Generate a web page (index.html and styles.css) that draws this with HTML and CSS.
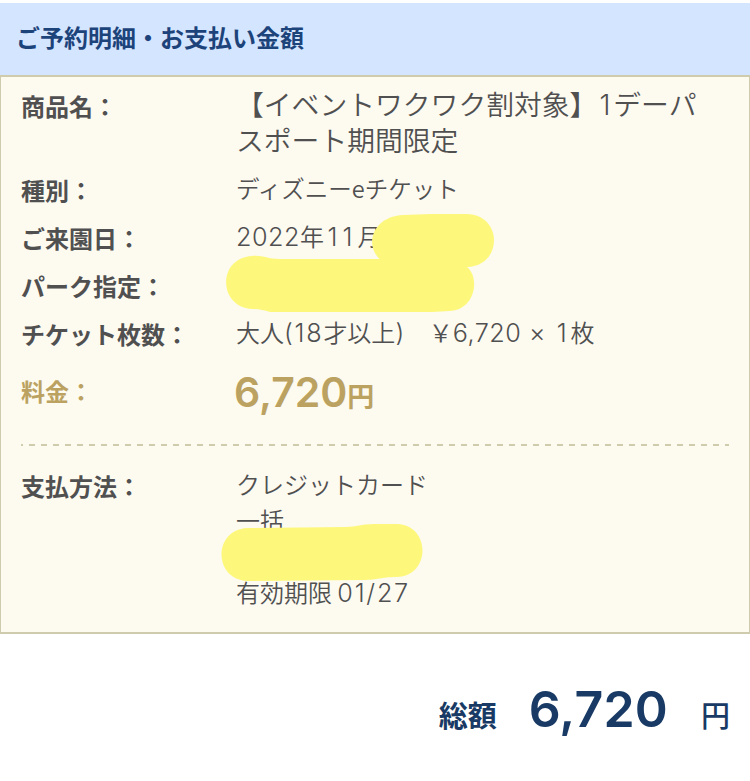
FILE: index.html
```html
<!DOCTYPE html>
<html lang="ja">
<head>
<meta charset="UTF-8">
<meta name="viewport" content="width=device-width,initial-scale=1">
<title>ご予約明細・お支払い金額</title>
<link rel="stylesheet" href="styles.css">
</head>
<body>
  <main>
    <h1 class="heading">ご予約明細・お支払い金額</h1>
    <section class="detail">
      <dl class="list">
        <div class="row name">
          <dt>商品名：</dt>
          <dd>【イベントワクワク割対象】<span class="num one">1</span>デーパ<br>スポート期間限定</dd>
        </div>
        <div class="row">
          <dt>種別：</dt>
          <dd class="kind">ディズニーeチケット</dd>
        </div>
        <div class="row">
          <dt>ご来園日：</dt>
          <dd><span class="num">2022</span>年<span class="num ones">11</span>月</dd>
        </div>
        <div class="row">
          <dt>パーク指定：</dt>
          <dd></dd>
        </div>
        <div class="row">
          <dt>チケット枚数：</dt>
          <dd>大人<span class="num wide">(18</span>才以上<span class="num">)</span>　￥<span class="num">6,720 × </span><span class="num one">1</span>枚</dd>
        </div>
        <div class="row fee">
          <dt>料金：</dt>
          <dd><span class="price">6,720</span><span class="yen">円</span></dd>
        </div>
      </dl>
      <dl class="list payment">
        <div class="row">
          <dt>支払方法：</dt>
          <dd>クレジットカード<br>一括<br><br>有効期限 <span class="num wide">01/27</span></dd>
        </div>
      </dl>
      <svg class="marker" width="750" height="560" viewBox="0 75 750 560" aria-hidden="true">
        <path d="M403 215L431 214L467 214C503 215 503 266 467 267L399 267C361 263 364 217 403 215Z"/>
        <path d="M252 256C264 255 266 259 280 259L460 259L467 267C480 277 476 310 449 311L433 312L270 312C264 310 258 309 252 309C218 307 217 258 252 256Z"/>
        <path d="M247 528L345 527C358 527 360 524 374 524L397 524C431 525 431 576 397 577C380 577 379 580 363 580L247 581C213 579 213 530 247 528Z"/>
      </svg>
    </section>
    <p class="total"><span class="label">総額</span><strong>6,720</strong><span class="unit">円</span></p>
  </main>
</body>
</html>
```
FILE: styles.css
```css
:root {
  --navy:#183a64;
  --gold:#bba261;
  --text:#505050;
  --line:#cfccae;
}
*,*::before,*::after{box-sizing:border-box;}
body {
  margin:0;font-family:"Noto Sans CJK JP",sans-serif;
  background:#fff;color:var(--text);
}
.heading {
  margin:3px 0 0;height:72px;padding:0 16px;background:#d4e6ff;color:#1d437b;
  font-size:24px;line-height:68px;font-weight:600;
}
.detail {
  position:relative;height:559px;padding:9px 20px 0;background:#fdfaf0;border:2px solid var(--line);border-width:2px 1px;
}
.list {
  margin:0;
}
.row {
  display:flex;min-height:48px;font-size:24px;line-height:36px;
}
dt {
  width:215px;flex:none;font-weight:600;padding-top:2px;white-space:nowrap;
}
dd {
  margin:0;font-weight:350;white-space:nowrap;
}
.num {
  font-family:Inter,sans-serif;font-size:1.05em;font-weight:300;line-height:1;letter-spacing:.02em;
}
.one {
  padding:0 .13em .1em;
}
.ones {
  letter-spacing:.2em;padding-left:.14em;
}
.wide {
  letter-spacing:.07em;
}
.name {
  min-height:84px;
}
.name dd {
  margin-top:-1px;font-size:27.8px;
}
.name .one {
  font-size:1em;padding:0 .08em;
}
.kind {
  font-size:23.5px;
}
.fee {
  color:var(--gold);padding-top:9px;min-height:82px;
}
.fee dd {
  padding-top:3px;margin-left:-2px;
}
.price {
  font-family:Inter,sans-serif;font-size:41px;font-weight:580;
}
.yen {
  font-size:27px;font-weight:600;
}
/* 6px dashes, 6px gaps */
.payment {
  padding-top:22px;
  background:repeating-linear-gradient(90deg,var(--line) 0 6px,transparent 6px 12px) -4px 0/calc(100% + 4px) 2px no-repeat;
}
/* highlighter strokes over the private values */
.marker {
  position:absolute;left:-1px;top:-2px;fill:#fdf87c;
}
.total {
  display:flex;justify-content:flex-end;align-items:baseline;margin:45px 20px 0;color:var(--navy);font-weight:600;
}
.total .label,.total .unit {
  font-size:29px;
}
.total .unit {
  font-weight:500;
}
.total strong {
  font-family:Inter,sans-serif;font-size:50px;font-weight:580;letter-spacing:.2px;margin:0 33px 0 32px;
}
```
